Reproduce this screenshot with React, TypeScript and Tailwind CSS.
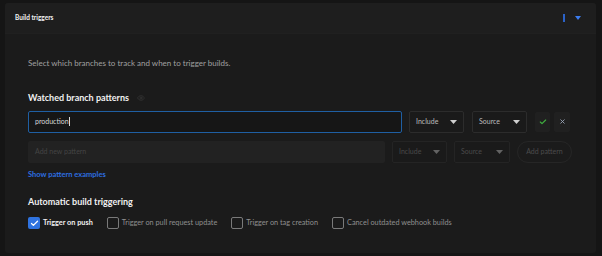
import { Check, X, Eye } from 'lucide-react'

function Caret({ dim }: { dim?: boolean }) {
  return (
    <svg width="7" height="4" viewBox="0 0 7 4" className={dim ? 'opacity-40' : ''}>
      <path d="M0 0h7L3.5 4z" fill="#cfcfcf" />
    </svg>
  )
}

function Select({ label, dim, w }: { label: string; dim?: boolean; w: string }) {
  return (
    <div
      className={`${w} h-[22px] flex items-center justify-between px-[6px] rounded-[2px] border ${
        dim ? 'border-[#242424] text-[#4a4a4a]' : 'border-[#2c2c2c] text-[#bdbdbd]'
      } text-[7px] bg-[#1a1a1a]`}
    >
      <span>{label}</span>
      <Caret dim={dim} />
    </div>
  )
}

function Box({ checked, label }: { checked?: boolean; label: string }) {
  return (
    <div className="flex items-center gap-[3px]">
      {checked ? (
        <div className="w-[12px] h-[12px] rounded-[2px] bg-[#2f73e0] flex items-center justify-center">
          <Check size={9} strokeWidth={3.5} color="#fff" />
        </div>
      ) : (
        <div className="w-[12px] h-[12px] rounded-[2px] border border-[#7a7a7a]" />
      )}
      <span className={checked ? 'text-[#f0f0f0] font-bold' : 'text-[#8f8f8f]'}>{label}</span>
    </div>
  )
}

export default function App() {
  return (
    <div
      className="w-[602px] h-[256px] bg-[#151515] pt-[3px] pl-[5px] overflow-hidden"
      style={{ fontFamily: 'Lato, "Noto Sans", sans-serif' }}
    >
      <div className="w-[591px] h-[250px] rounded-[3px] bg-[#1b1b1b] overflow-hidden">
        <div className="h-[31px] bg-[#1e1e1e] border-b border-[#202020] flex items-center justify-between pl-[10px] pr-[15px]">
          <span className="text-[6.5px] font-bold text-[#f2f2f2]">Build triggers</span>
          <div className="flex items-center gap-[10px]">
            <div className="w-[2px] h-[8px] bg-[#2b62c8]" />
            <svg width="6" height="4" viewBox="0 0 6 4">
              <path d="M0 0h6L3 4z" fill="#3a7cf0" />
            </svg>
          </div>
        </div>

        <div className="pl-[23px] pr-[20px]">
          <p className="mt-[23px] text-[8px] text-[#a0a0a0]">
            Select which branches to track and when to trigger builds.
          </p>

          <div className="mt-[22px] flex items-center gap-[8px]">
            <h2 className="text-[9px] font-bold text-[#f0f0f0]">Watched branch patterns</h2>
            <Eye size={8} color="#3a3a3a" />
          </div>

          <div className="mt-[6px] flex items-center">
            <div className="w-[374px] h-[22px] rounded-[2px] border border-[#1f5fa3] bg-[#161616] flex items-center px-[6px] text-[7px] text-[#d8d8d8]">
              production<span className="w-px h-[9px] bg-[#d8d8d8]" />
            </div>
            <div className="ml-[7px]">
              <Select label="Include" w="w-[55px]" />
            </div>
            <div className="ml-[8px]">
              <Select label="Source" w="w-[55px]" />
            </div>
            <div className="ml-[8px] w-[15px] h-[20px] rounded-[2px] bg-[#202020] flex items-center justify-center">
              <Check size={8} strokeWidth={3.5} color="#3fae3f" />
            </div>
            <div className="ml-[4px] w-[16px] h-[20px] rounded-[2px] bg-[#202020] flex items-center justify-center">
              <X size={7} strokeWidth={3} color="#9aa6b8" />
            </div>
          </div>

          <div className="mt-[8px] flex items-center">
            <div className="w-[357px] h-[22px] rounded-[2px] bg-[#222222] flex items-center px-[7px] text-[7px] text-[#444444]">
              Add new pattern
            </div>
            <div className="ml-[7px]">
              <Select label="Include" dim w="w-[55px]" />
            </div>
            <div className="ml-[7px]">
              <Select label="Source" dim w="w-[56px]" />
            </div>
            <div className="ml-[7px] w-[55px] h-[22px] rounded-full border border-[#262626] flex items-center justify-center text-[7px] text-[#4c4c4c]">
              Add pattern
            </div>
          </div>

          <a className="mt-[6px] block text-[7.5px] font-bold text-[#2d6ee0]">Show pattern examples</a>

          <h2 className="mt-[15px] text-[9px] font-bold text-[#f0f0f0]">Automatic build triggering</h2>

          <div className="mt-[9px] flex items-center gap-[14px] text-[7.3px]">
            <Box checked label="Trigger on push" />
            <Box label="Trigger on pull request update" />
            <Box label="Trigger on tag creation" />
            <Box label="Cancel outdated webhook builds" />
          </div>
        </div>
      </div>
    </div>
  )
}
